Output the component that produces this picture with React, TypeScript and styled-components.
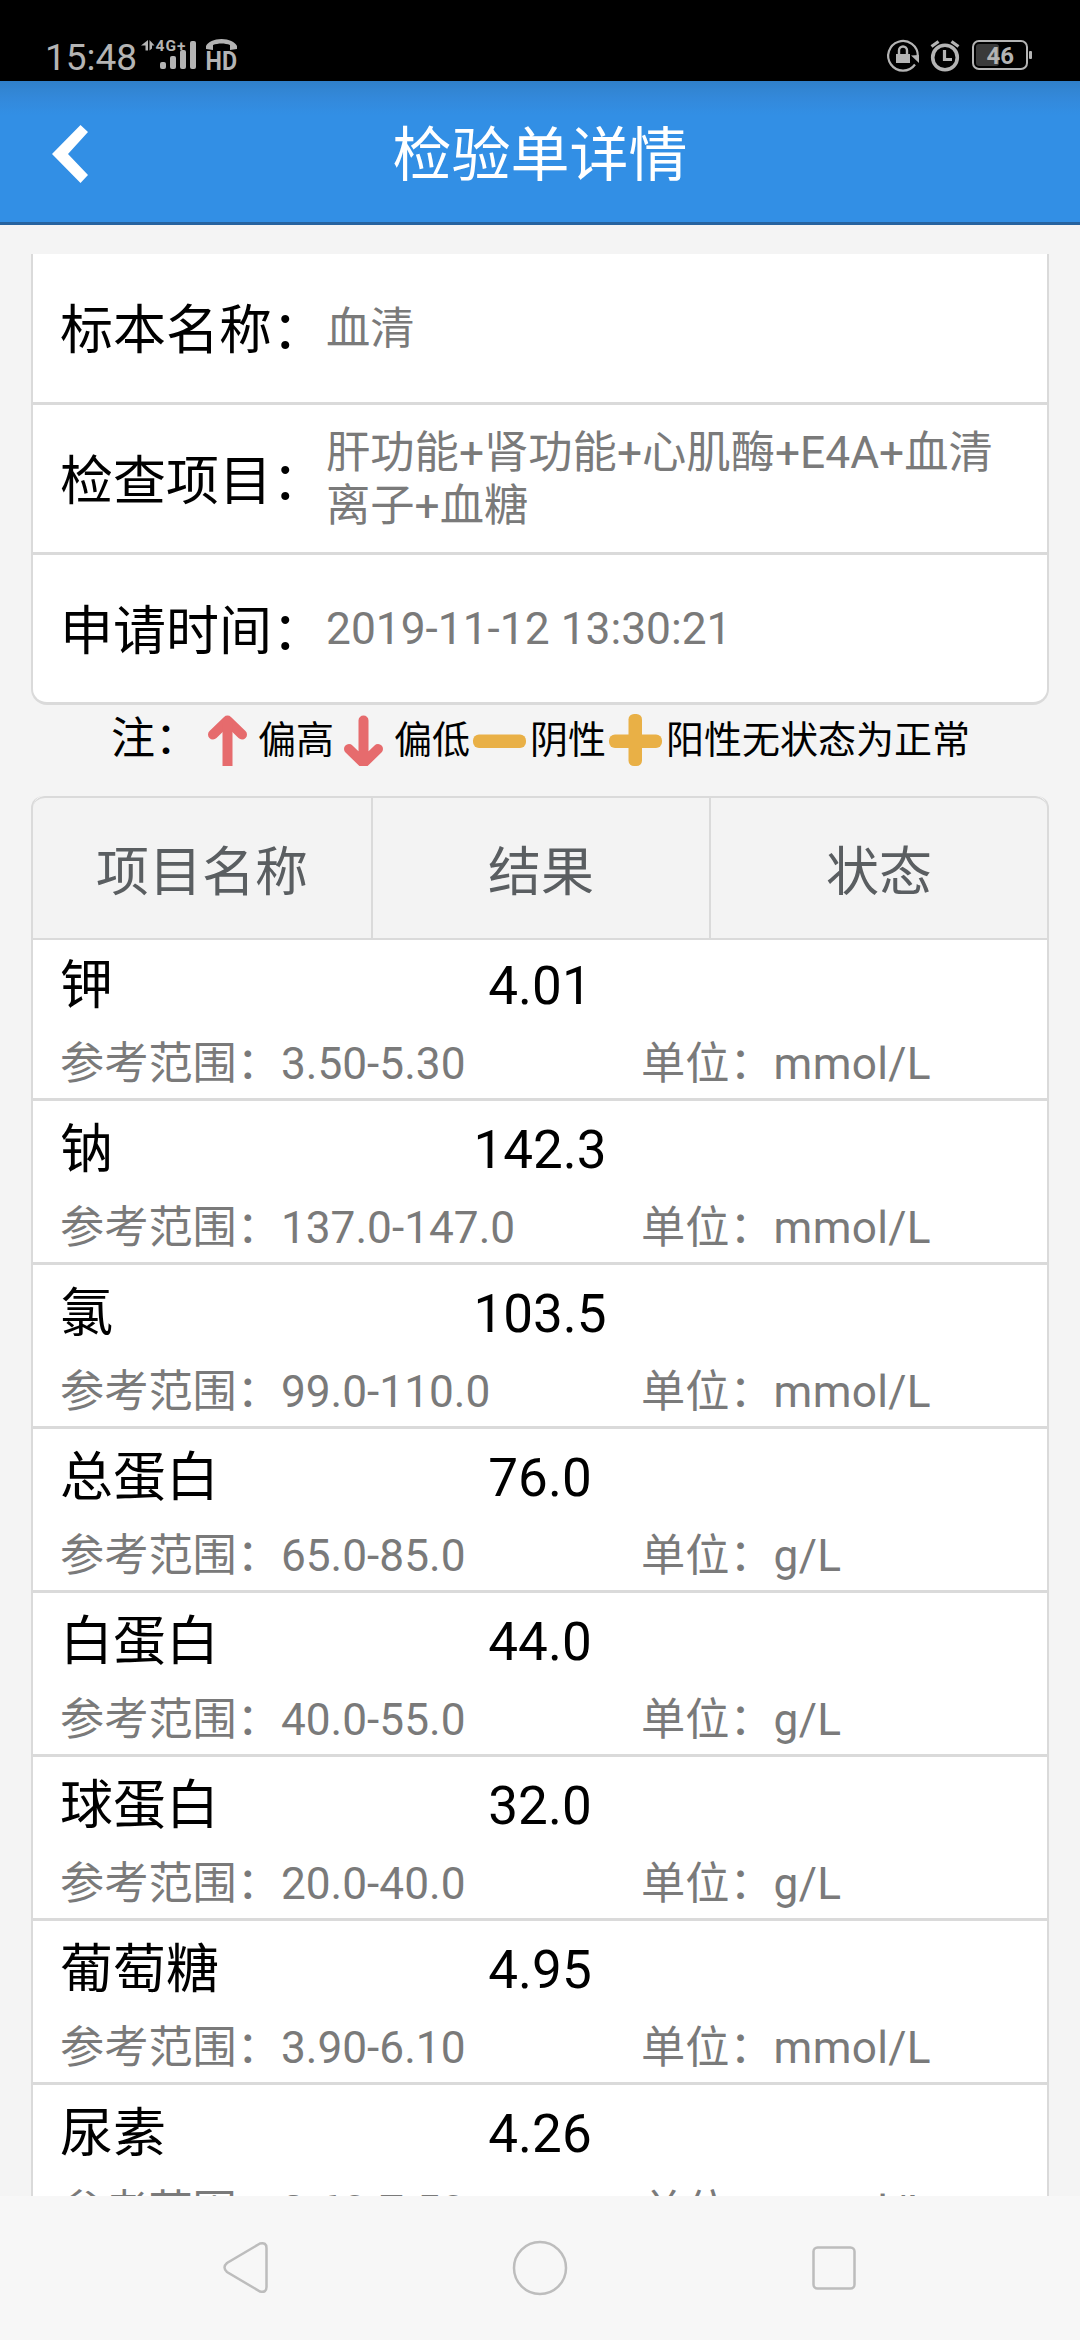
import React from 'react';
import styled, { createGlobalStyle } from 'styled-components';

const GlobalStyle = createGlobalStyle`
  body { margin: 0; background: #f4f4f4; }
  * { box-sizing: border-box; }
`;

const Screen = styled.div`
  width: 1080px;
  height: 2340px;
  overflow: hidden;
  display: flex;
  flex-direction: column;
  background: #f4f4f4;
  color: #000;
  font-family: Roboto, 'Noto Sans CJK SC', sans-serif;
`;

const StatusBar = styled.header`
  height: 81px;
  flex: none;
  display: flex;
  justify-content: space-between;
  padding: 32px 46px 0 45px;
  background: #000;
  color: #b4b4b4;
`;

const StatusGroup = styled.div`
  display: flex;
  align-items: flex-start;
`;

const Clock = styled.span`
  padding-top: 1px;
  font-size: 37px;
  line-height: 50px;
  width: 95px;
  white-space: nowrap;
`;

const AppBar = styled.div`
  height: 144px;
  flex: none;
  display: grid;
  grid-template-columns: 140px 1fr 140px;
  align-items: center;
  border-bottom: 3px solid #27639f;
  background: linear-gradient(#2f7fc9 0, #3285d3 9px, #3389db 18px, #328fe5 34px, #328fe5 100%);
  color: #fff;
`;

const BackButton = styled.button`
  border: 0;
  padding: 4px 0 0 48px;
  background: none;
  display: flex;
`;

const Title = styled.h1`
  margin: 0;
  padding-top: 9px;
  font-size: 59px;
  line-height: 80px;
  font-weight: 400;
  text-align: center;
`;

const Content = styled.main`
  flex: 1;
  min-height: 0;
  overflow: hidden;
  padding: 29px 31px 0;
`;

const InfoCard = styled.section`
  border: solid #dadada;
  border-width: 0 2px 3px;
  border-radius: 0 0 16px 16px;
  background: #fff;
`;

const InfoRow = styled.div`
  height: 150px;
  display: flex;
  align-items: center;
  padding-left: 27px;
  border-bottom: 3px solid #dadada;

  &:first-child { height: 151px; }
  &:last-child { height: 147px; border-bottom: 0; }
`;

const InfoLabel = styled.span`
  width: 266px;
  flex: none;
  padding-bottom: 4px;
  font-size: 53px;
  white-space: nowrap;
`;

const InfoValue = styled.span`
  width: 680px;
  padding-top: 3px;
  font-size: 44.3px;
  line-height: 53.5px;
  color: #7a7a7a;
`;

const Legend = styled.div`
  height: 91px;
  display: flex;
  align-items: flex-start;
  padding: 8px 0 0 80px;
  white-space: nowrap;
`;

const LegendTitle = styled.span`
  width: 87px;
  padding-top: 1px;
  font-size: 44px;
  line-height: 50px;
`;

const LegendItem = styled.span`
  display: flex;
  font-size: 38px;
  line-height: 55px;
`;

const Table = styled.section`
  border: solid #dadada;
  border-width: 0 2px;
  border-radius: 12px 12px 0 0;
  background: #fff;
`;

const TableHead = styled.div`
  position: relative;
  z-index: 1;
  height: 144px;
  margin: 0 0 -3px;
  display: grid;
  grid-template-columns: 340px 338px 1fr;
  border: solid #dadada;
  border-width: 2px 0;
  border-radius: 12px 12px 0 0;
  background: #f3f3f3;
`;

const HeadCell = styled.div`
  display: flex;
  align-items: center;
  justify-content: center;
  padding-bottom: 1px;
  border-right: 2px solid #dadada;
  font-size: 53px;
  color: #5a5e61;

  &:last-child { border-right: 0; }
`;

const ResultRow = styled.div`
  height: 164px;
  display: grid;
  grid-template-columns: 311px 338px 1fr;
  grid-template-rows: 92px 66px;
  padding-left: 27px;
  border-bottom: 3px solid #dadada;
  white-space: nowrap;
`;

const ItemName = styled.span`
  font-size: 53px;
  line-height: 99px;
`;

const ItemResult = styled.span`
  font-size: 53px;
  line-height: 99px;
  text-align: center;
`;

const Details = styled.div`
  grid-column: 1 / -1;
  display: grid;
  grid-template-columns: 581px 1fr;
  font-size: 44.2px;
  line-height: 70px;
  color: #7a7a7a;
`;

const Unit = styled.span`
  letter-spacing: 0.3px;
`;

const NavBar = styled.nav`
  height: 144px;
  flex: none;
  background: #f7f7f7;
`;

const info = [
  ['标本名称：', '血清'],
  ['检查项目：', '肝功能+肾功能+心肌酶+E4A+血清离子+血糖'],
  ['申请时间：', '2019-11-12 13:30:21'],
];

const results = [
  ['钾', '4.01', '3.50-5.30', 'mmol/L'],
  ['钠', '142.3', '137.0-147.0', 'mmol/L'],
  ['氯', '103.5', '99.0-110.0', 'mmol/L'],
  ['总蛋白', '76.0', '65.0-85.0', 'g/L'],
  ['白蛋白', '44.0', '40.0-55.0', 'g/L'],
  ['球蛋白', '32.0', '20.0-40.0', 'g/L'],
  ['葡萄糖', '4.95', '3.90-6.10', 'mmol/L'],
  ['尿素', '4.26', '2.60-7.50', 'mmol/L'],
];

const SignalIcons = () => (
  <svg width="100" height="48" viewBox="140 32 100 48" fill="#b4b4b4" fontFamily="Roboto, sans-serif">
    <path d="M141 45.500l7-5.500v10.500h-2.500v-5zM149.500 40l5 5.500h-2.500v3l-2.500 2z" />
    <text x="155.500" y="50.500" fontSize="15.500" fontWeight="700" textLength="30">4G+</text>
    <rect x="160" y="62" width="6" height="7" rx="2" />
    <rect x="170" y="56" width="6" height="13" rx="2" />
    <rect x="180" y="50" width="6" height="19" rx="2" />
    <rect x="190" y="41" width="6" height="28" rx="2" />
    <path d="M206 49v-3c2-4 8-7 15.500-7s13.500 3 15.500 7v3l-7 1v-5c-5-2-12-2-17 0v5z" />
    <text x="205.500" y="69.500" fontSize="26" fontWeight="700" textLength="31.500" lengthAdjust="spacingAndGlyphs">HD</text>
  </svg>
);

const DeviceIcons = () => (
  <svg width="150" height="42" viewBox="884 32 150 42" fill="none" stroke="#b4b4b4" fontFamily="Roboto, sans-serif">
    <path d="M915 64.500A14.800 14.800 0 1 1 917.800 56" strokeWidth="2.200" />
    <path d="M911 55.500l8-0.500v8z" fill="#b4b4b4" stroke="none" />
    <rect x="896" y="54" width="14" height="9" fill="#b4b4b4" stroke="none" />
    <path d="M899 55v-4.500a4 4 0 0 1 8 0V55" strokeWidth="2.400" />
    <circle cx="945" cy="57.500" r="12.300" strokeWidth="3.600" />
    <path d="M931.500 46.500l7-5M958.500 46.500l-7-5" strokeWidth="3.200" />
    <path d="M944.500 50v9.500h7.500" strokeWidth="3.200" />
    <rect x="973" y="41" width="54" height="28" rx="6" strokeWidth="2" />
    <rect x="976" y="44" width="23" height="22" rx="3" fill="#3a3a3a" stroke="none" />
    <rect x="1029" y="51" width="3" height="8" rx="1" fill="#b4b4b4" stroke="none" />
    <text x="986.500" y="64" fontSize="24" fontWeight="700" fill="#b4b4b4" stroke="none">46</text>
  </svg>
);

const red = '#e66b6d';
const amber = '#e9b046';

const ArrowUp = () => (
  <svg width="60" height="53" viewBox="0 0 60 53" fill="none" stroke={red} strokeWidth="10" strokeLinecap="round" strokeLinejoin="round">
    <path d="M15 21.500L29.500 7.500L44 21.500" />
    <path d="M29.500 10V53" strokeLinecap="butt" />
  </svg>
);

const ArrowDown = () => (
  <svg width="60" height="53" viewBox="0 0 60 53" fill="none" stroke={red} strokeWidth="10" strokeLinecap="round" strokeLinejoin="round">
    <path d="M15 36L29.500 50L44 36M29.500 7.500V46" />
  </svg>
);

const Minus = () => (
  <svg width="60" height="53" viewBox="0 0 60 53">
    <rect x="3" y="21.500" width="53" height="13.500" rx="6" fill={amber} />
  </svg>
);

const Plus = () => (
  <svg width="60" height="53" viewBox="0 0 60 53" fill={amber}>
    <rect x="3" y="21.500" width="53" height="13.500" rx="6" />
    <rect x="22.500" y="1" width="13.500" height="52" rx="5.500" />
  </svg>
);

export default function App() {
  return (
    <Screen>
      <GlobalStyle />
      <StatusBar>
        <StatusGroup>
          <Clock>15:48</Clock>
          <SignalIcons />
        </StatusGroup>
        <StatusGroup>
          <DeviceIcons />
        </StatusGroup>
      </StatusBar>
      <AppBar>
        <BackButton aria-label="返回">
          <svg width="44" height="64" viewBox="48 122 44 64">
            <path d="M52 154L80.500 125L88 132L68 154L88 175L80.500 183Z" fill="#fff" />
          </svg>
        </BackButton>
        <Title>检验单详情</Title>
      </AppBar>
      <Content>
        <InfoCard>
          {info.map(([label, value]) => (
            <InfoRow key={label}>
              <InfoLabel>{label}</InfoLabel>
              <InfoValue>{value}</InfoValue>
            </InfoRow>
          ))}
        </InfoCard>
        <Legend>
          <LegendTitle>注：</LegendTitle>
          <LegendItem><ArrowUp />偏高</LegendItem>
          <LegendItem><ArrowDown />偏低</LegendItem>
          <LegendItem><Minus />阴性</LegendItem>
          <LegendItem><Plus />阳性无状态为正常</LegendItem>
        </Legend>
        <Table>
          <TableHead>
            <HeadCell>项目名称</HeadCell>
            <HeadCell>结果</HeadCell>
            <HeadCell>状态</HeadCell>
          </TableHead>
          {results.map(([name, result, range, unit]) => (
            <ResultRow key={name}>
              <ItemName>{name}</ItemName>
              <ItemResult>{result}</ItemResult>
              <Details>
                <span>参考范围：{range}</span>
                <span>单位：<Unit>{unit}</Unit></span>
              </Details>
            </ResultRow>
          ))}
        </Table>
      </Content>
      <NavBar>
        <svg width="1080" height="144" viewBox="0 2196 1080 144" fill="none" stroke="#bdbdbd" strokeWidth="2.500">
          <path d="M260 2243.500L227 2263Q222 2267.500 227 2272L260 2291.500Q266.500 2293 266.500 2287V2248Q266.500 2242 260 2243.500Z" />
          <circle cx="540" cy="2268" r="26" />
          <rect x="813.500" y="2247.500" width="41" height="41" rx="4" />
        </svg>
      </NavBar>
    </Screen>
  );
}
